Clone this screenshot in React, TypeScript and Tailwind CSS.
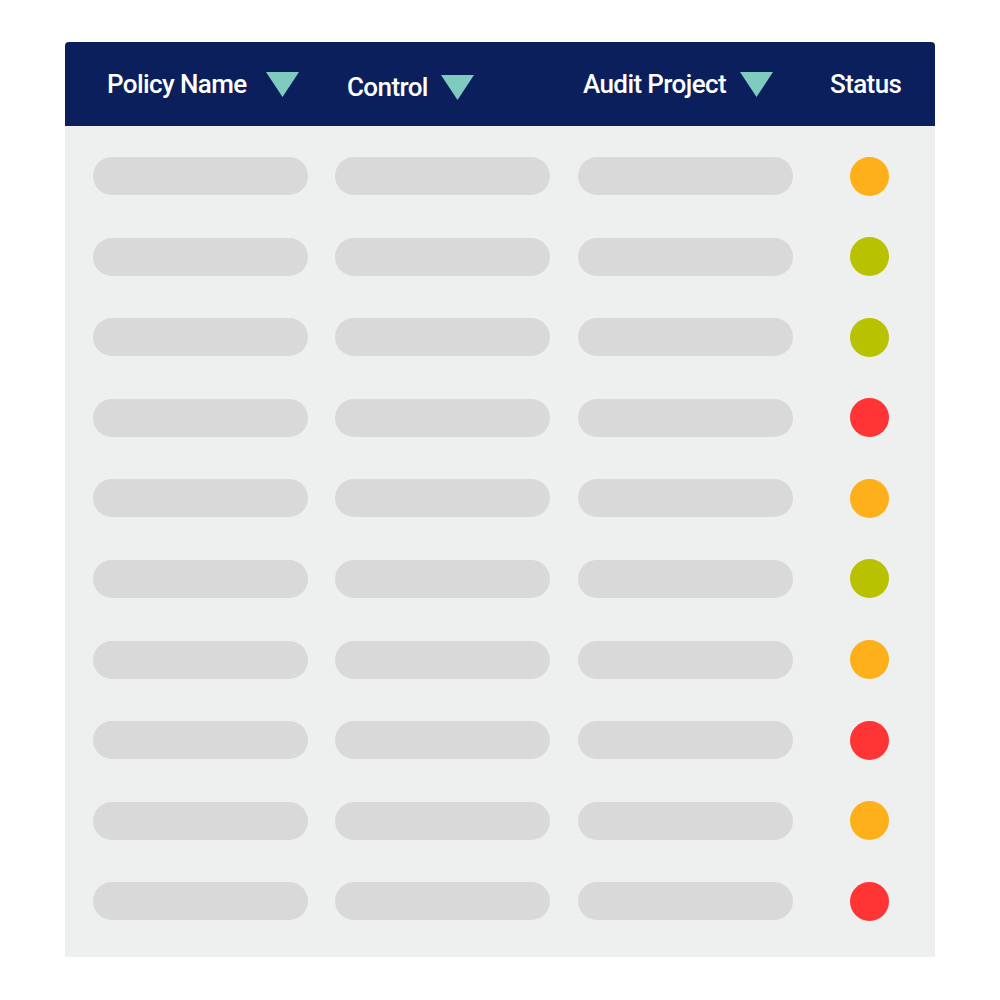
const statuses = ['o', 'g', 'g', 'r', 'o', 'g', 'o', 'r', 'o', 'r'];

const dotColor: Record<string, string> = {
  o: 'bg-[#fdb019]',
  g: 'bg-[#b8c200]',
  r: 'bg-[#ff3434]',
};

const Caret = () => (
  <svg width="33" height="25" viewBox="0 0 33 25" className="shrink-0">
    <polygon points="0,0 33,0 16.5,25" fill="#7fcbbf" />
  </svg>
);

export default function App() {
  return (
    <div className="w-[1000px] h-[1000px] bg-white pt-[42px] pl-[65px]" style={{ fontFamily: 'Roboto, "Liberation Sans", sans-serif' }}>
      <div className="w-[870px] h-[915px] bg-[#eeefef]">
        {/* Header */}
        <div className="h-[84px] bg-[#0a1f5c] rounded-t-[4px] flex items-center text-white font-medium text-[26px] tracking-[-0.6px]">
          <div className="flex items-center shrink-0 w-[282px] pl-[42px] gap-[19px]">
            <span>Policy Name</span>
            <Caret />
          </div>
          <div className="flex items-center shrink-0 w-[236px] gap-[13px] mt-[6px]">
            <span>Control</span>
            <Caret />
          </div>
          <div className="flex items-center shrink-0 w-[247px] gap-[14px]">
            <span>Audit Project</span>
            <Caret />
          </div>
          <div className="shrink-0">Status</div>
        </div>

        {/* Rows */}
        <div className="flex flex-col gap-[42.6px] pt-[31px] pl-[28px]">
          {statuses.map((s, i) => (
            <div key={i} className="flex items-center h-[38px]">
              <div className="w-[215px] h-[38px] rounded-full bg-[#d9d9d9]" />
              <div className="w-[215px] h-[38px] rounded-full bg-[#d9d9d9] ml-[27px]" />
              <div className="w-[215px] h-[38px] rounded-full bg-[#d9d9d9] ml-[28px]" />
              <div className={`w-[39px] h-[39px] rounded-full ml-[57px] ${dotColor[s]}`} />
            </div>
          ))}
        </div>
      </div>
    </div>
  );
}
